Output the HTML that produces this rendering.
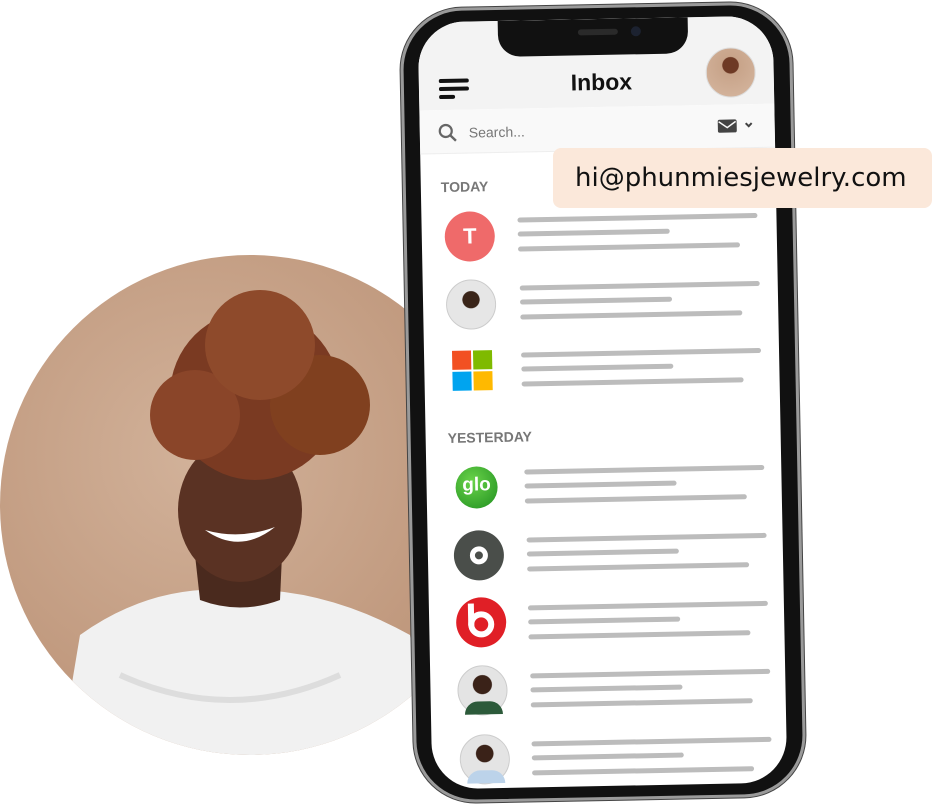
<!DOCTYPE html>
<html><head><meta charset="utf-8"><style>
*{margin:0;padding:0;box-sizing:border-box}
body{width:932px;height:807px;background:#fff;position:relative;overflow:hidden;font-family:"Liberation Sans",sans-serif}
.circle{position:absolute;left:0;top:255px;width:500px;height:500px;border-radius:50%;overflow:hidden;background:radial-gradient(circle at 40% 40%,#d2b29a,#c19a7f 60%,#b68d72)}
.phone{position:absolute;left:407px;top:5px;width:392px;height:795px;transform:rotate(-1.1deg);transform-origin:50% 50%}
.frame{position:absolute;inset:0;border-radius:62px;background:#111;border:3px solid #9a9a9a;box-shadow:0 0 0 1px #444}
.screen{position:absolute;left:18px;top:14px;right:19px;bottom:14px;border-radius:46px;background:#fff;overflow:hidden}
.hdr{position:absolute;left:0;top:0;right:0;height:88px;background:#f3f3f3}
.srch{position:absolute;left:0;top:88px;right:0;height:44px;background:#f9f9f9;border-bottom:1px solid #eee}
.notch{position:absolute;left:80px;top:0;width:190px;height:36px;background:#111;border-radius:0 0 22px 22px}
.ln{position:absolute;height:5px;border-radius:3px;background:#bcbcbc}
.av{position:absolute;width:50px;height:50px;border-radius:50%;transform:translate(-25px,-25px)}
.lbl{position:absolute;font-size:14px;font-weight:bold;color:#777}
</style></head><body>
<div class="circle">
 <svg width="500" height="500" viewBox="0 0 500 500">
  <path d="M60 500 L80 380 Q150 330 230 335 Q320 330 410 380 L430 500Z" fill="#f1f1f1"/>
  <path d="M120 420 Q230 470 340 420" stroke="#ddd" stroke-width="6" fill="none"/>
  <path d="M195 300 L200 345 Q240 360 280 345 L282 300Z" fill="#4a2a1e"/>
  <ellipse cx="240" cy="255" rx="62" ry="72" fill="#5a3223"/>
  <circle cx="255" cy="140" r="85" fill="#7a3a22"/>
  <circle cx="195" cy="160" r="45" fill="#8a4529"/>
  <circle cx="320" cy="150" r="50" fill="#80401f"/>
  <circle cx="260" cy="90" r="55" fill="#8e4a2b"/>
  <path d="M205 275 Q240 300 275 272 Q240 285 205 275Z" fill="#fff"/>
 </svg>
</div>
<div class="phone">
 <div class="frame"></div>
 <div class="screen">
  <div class="hdr"></div>
  <div class="srch"></div>
  <div style="position:absolute;left:20px;top:57px;width:30px;height:4px;background:#111;border-radius:2px"></div>
  <div style="position:absolute;left:20px;top:65px;width:30px;height:4px;background:#111;border-radius:2px"></div>
  <div style="position:absolute;left:20px;top:73px;width:16px;height:4px;background:#111;border-radius:2px"></div>
  <div style="position:absolute;left:0;right:0;top:50px;text-align:center;font-size:23px;font-weight:bold;color:#111;padding-left:10px">Inbox</div>
  <div class="av" style="left:312px;top:56px;width:50px;height:50px;background:radial-gradient(circle at 50% 35%,#6e3a25 20%,#c8a48a 22%,#d6b7a0);border:1px solid #ddd"></div>
  <svg style="position:absolute;left:18px;top:101px" width="20" height="20"><circle cx="8" cy="8" r="6" stroke="#666" stroke-width="2.2" fill="none"/><path d="M12.5 12.5 L18 18" stroke="#666" stroke-width="2.4"/></svg>
  <div style="position:absolute;left:49px;top:103px;font-size:14px;color:#777">Search...</div>
  <svg style="position:absolute;left:298px;top:101px" width="38" height="16"><rect x="0" y="2" width="19" height="13" rx="2" fill="#444"/><path d="M1 4 L9.5 10 L18 4" stroke="#f9f9f9" stroke-width="1.5" fill="none"/><path d="M28 6 L31 9 L34 6" stroke="#444" stroke-width="2" fill="none"/></svg>
  <div class="notch"></div>
  <div style="position:absolute;left:160px;top:10px;width:40px;height:6px;border-radius:3px;background:#2a2a2a"></div>
  <div style="position:absolute;left:213px;top:8px;width:10px;height:10px;border-radius:50%;background:#1c2230"></div>
  <div class="lbl" style="left:20px;top:157px">TODAY</div>
  <div class="lbl" style="left:22px;top:408px">YESTERDAY</div>

  <div class="av" style="left:48px;top:215px;background:#ef6a6a;color:#fff;font-weight:bold;font-size:22px;text-align:center;line-height:50px">T</div>
  <div class="av" style="left:48px;top:283px;background:radial-gradient(circle at 50% 40%,#3a2519 22%,#e6e6e6 24%);border:1px solid #ccc"></div>
  <div class="av" style="left:48px;top:349px;width:40px;height:40px;transform:translate(-20px,-20px);background:linear-gradient(#f25022,#f25022) 0 0/19px 19px no-repeat,linear-gradient(#7fba00,#7fba00) 21px 0/19px 19px no-repeat,linear-gradient(#00a4ef,#00a4ef) 0 21px/19px 19px no-repeat,linear-gradient(#ffb900,#ffb900) 21px 21px/19px 19px no-repeat;border-radius:0"></div>
  <div class="av" style="left:50px;top:466px;width:42px;height:42px;transform:translate(-21px,-21px);background:radial-gradient(circle at 40% 35%,#6ad34a,#1f8f1f);color:#fff;font-size:19px;font-weight:bold;text-align:center;line-height:38px">glo</div>
  <div class="av" style="left:51px;top:534px;background:#4a4e4a"><div style="position:absolute;left:16px;top:16px;width:18px;height:18px;border-radius:50%;border:5px solid #fff"></div></div>
  <div class="av" style="left:52px;top:601px;background:#e01f26"><div style="position:absolute;left:12px;top:14px;width:26px;height:26px;border-radius:50%;border:6px solid #fff"></div><div style="position:absolute;left:12px;top:6px;width:6px;height:22px;background:#fff"></div></div>
  <div class="av" style="left:52px;top:669px;background:radial-gradient(circle at 50% 38%,#3a2218 24%,#e4e4e4 26%);border:1px solid #ccc"><div style="position:absolute;left:6px;bottom:0;width:38px;height:13px;background:#2c5a3a;border-radius:20px 20px 0 0"></div></div>
  <div class="av" style="left:53px;top:738px;background:radial-gradient(circle at 50% 38%,#3a2218 22%,#e4e4e4 24%);border:1px solid #ccc"><div style="position:absolute;left:6px;bottom:0;width:38px;height:13px;background:#bcd3ea;border-radius:20px 20px 0 0"></div></div>

  <div class="ln" style="left:96px;top:197px;width:240px"></div><div class="ln" style="left:96px;top:211px;width:152px"></div><div class="ln" style="left:96px;top:226px;width:222px"></div>
  <div class="ln" style="left:97px;top:265px;width:240px"></div><div class="ln" style="left:97px;top:279px;width:152px"></div><div class="ln" style="left:97px;top:294px;width:222px"></div>
  <div class="ln" style="left:97px;top:332px;width:240px"></div><div class="ln" style="left:97px;top:346px;width:152px"></div><div class="ln" style="left:97px;top:361px;width:222px"></div>
  <div class="ln" style="left:98px;top:449px;width:240px"></div><div class="ln" style="left:98px;top:463px;width:152px"></div><div class="ln" style="left:98px;top:478px;width:222px"></div>
  <div class="ln" style="left:99px;top:517px;width:240px"></div><div class="ln" style="left:99px;top:531px;width:152px"></div><div class="ln" style="left:99px;top:546px;width:222px"></div>
  <div class="ln" style="left:99px;top:585px;width:240px"></div><div class="ln" style="left:99px;top:599px;width:152px"></div><div class="ln" style="left:99px;top:614px;width:222px"></div>
  <div class="ln" style="left:100px;top:653px;width:240px"></div><div class="ln" style="left:100px;top:667px;width:152px"></div><div class="ln" style="left:100px;top:682px;width:222px"></div>
  <div class="ln" style="left:100px;top:721px;width:240px"></div><div class="ln" style="left:100px;top:735px;width:152px"></div><div class="ln" style="left:100px;top:750px;width:222px"></div>
 </div>
</div>
<div style="position:absolute;left:553px;top:148px;width:379px;height:60px;background:#fbe8da;border-radius:8px;font-size:26px;color:#111;line-height:60px;padding-left:22px;font-family:'DejaVu Sans',sans-serif">hi@phunmiesjewelry.com</div>
</body></html>
